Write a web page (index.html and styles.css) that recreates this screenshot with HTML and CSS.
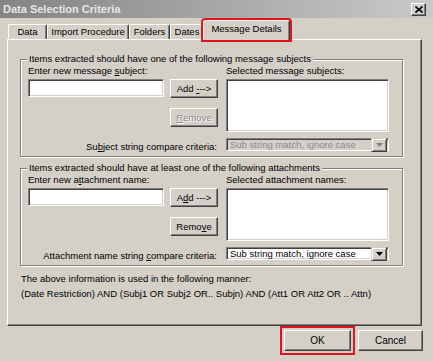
FILE: index.html
```html
<!DOCTYPE html>
<html lang="en">
<head>
    <meta charset="UTF-8">
    <title>Data Selection Criteria</title>
    <link rel="stylesheet" href="styles.css">
</head>
<body>
    <div class="window">
        <div class="titlebar">
            <span class="title">Data Selection Criteria</span>
            <span class="close">
                <svg width="8" height="7" viewBox="0 0 8 7"><path d="M0.5 0.5 L7.5 6.5 M7.5 0.5 L0.5 6.5" stroke="#000" stroke-width="1.6"/></svg>
            </span>
        </div>

        <div class="tabs">
            <div class="tab tab-data">Data</div>
            <div class="tab tab-import">Import Procedure</div>
            <div class="tab tab-folders">Folders</div>
            <div class="tab tab-dates">Dates</div>
            <div class="tab tab-active">Message Details</div>
        </div>

        <div class="panel">
            <div class="group group-first">
                <span class="legend">Items extracted should have one of the following message subjects</span>
                <div class="grid">
                    <div class="label">Enter new message <u>s</u>ubject:</div>
                    <div class="label col-right">Selected message subjects:</div>
                    <div class="textbox"></div>
                    <div class="btn-stack">
                        <button class="btn">Add <u>-</u>--&gt;</button>
                        <button class="btn disabled"><u>R</u>emove</button>
                    </div>
                    <div class="listbox"></div>
                    <div class="criteria-label">Su<u>b</u>ject string compare criteria:</div>
                    <div class="combo disabled">
                        <span class="combo-text">Sub string match, ignore case</span>
                        <span class="combo-arrow"><svg width="7" height="4" viewBox="0 0 7 4"><path d="M0 0 H7 L3.5 4 Z" fill="#808080"/></svg></span>
                    </div>
                </div>
            </div>

            <div class="group group-second">
                <span class="legend">Items extracted should have at least one of the following attachments</span>
                <div class="grid">
                    <div class="label">Enter new a<u>t</u>tachment name:</div>
                    <div class="label col-right">Selected attachment names:</div>
                    <div class="textbox"></div>
                    <div class="btn-stack">
                        <button class="btn">A<u>d</u>d ---&gt;</button>
                        <button class="btn">Remo<u>v</u>e</button>
                    </div>
                    <div class="listbox"></div>
                    <div class="criteria-label">Attachment name string <u>c</u>ompare criteria:</div>
                    <div class="combo">
                        <span class="combo-text">Sub string match, ignore case</span>
                        <span class="combo-arrow"><svg width="7" height="4" viewBox="0 0 7 4"><path d="M0 0 H7 L3.5 4 Z" fill="#000"/></svg></span>
                    </div>
                </div>
            </div>

            <p class="note note-first">The above information is used in the following manner:</p>
            <p class="note">(Date Restriction) AND (Subj1 OR Subj2 OR.. Subjn) AND (Att1 OR Att2 OR .. Attn)</p>
        </div>

        <div class="actions">
            <button class="btn btn-ok">OK</button>
            <button class="btn btn-cancel">Cancel</button>
        </div>
    </div>
</body>
</html>
```

FILE: styles.css
```css
* {
    box-sizing: border-box;
}

body {
    margin: 0;
    background-color: #d4d0c8;
    font-family: "Liberation Sans", Arial, sans-serif;
    font-size: 9.5px;
    color: #000;
}

u {
    text-decoration: underline;
    text-underline-offset: 1px;
}

.window {
    width: 433px;
    height: 361px;
    background-color: #d4d0c8;
    overflow: hidden;
}

.titlebar {
    height: 18px;
    display: flex;
    align-items: center;
    justify-content: space-between;
    padding: 0 7px 0 3px;
    background: linear-gradient(to right, #848484, #cacaca);
}

.title {
    color: #e6e6e6;
    font-weight: bold;
    font-size: 11px;
}

.close {
    width: 15px;
    height: 13px;
    display: flex;
    align-items: center;
    justify-content: center;
    background-color: #d4d0c8;
    border: 1px solid;
    border-color: #fff #404040 #404040 #fff;
    box-shadow: inset -1px -1px #808080;
}

/* tab strip */
.tabs {
    height: 21px;
    display: flex;
    align-items: flex-end;
    padding-left: 8px;
    position: relative;
    z-index: 1;
}

.tab {
    height: 15px;
    line-height: 13px;
    text-align: center;
    border: 1px solid;
    border-bottom: none;
    border-color: #fff #404040 transparent #fff;
    box-shadow: inset -1px 0 #808080;
    border-radius: 2px 2px 0 0;
}

.tab-data { width: 39px; }
.tab-import { width: 82px; }
.tab-folders { width: 41px; }
.tab-dates { width: 34px; }

.tab-active {
    width: 87px;
    height: 20px;
    line-height: 16px;
    margin: 0 0 -1px -1px;
    background-color: #d4d0c8;
    outline: 2px solid #e0141b;
    outline-offset: 0;
}

/* tab page */
.panel {
    margin-left: 7px;
    width: 415px;
    height: 287px;
    border: 1px solid;
    border-color: #fff #404040 #404040 #fff;
    box-shadow: inset -1px -1px #808080;
    padding-top: 19px;
}

.group {
    position: relative;
    margin-left: 12px;
    width: 383px;
    border: 1px solid #808080;
    box-shadow: inset 1px 1px #fff, 1px 1px #fff;
    padding: 5px 7px 5px;
}

.group-second {
    margin-top: 11px;
}

.legend {
    position: absolute;
    top: -7px;
    left: 6px;
    padding: 0 2px;
    line-height: 12px;
    background-color: #d4d0c8;
}

.grid {
    display: grid;
    grid-template-columns: 136px 6px 48px 8px 163px;
    grid-template-rows: 12px 53px 17px;
    row-gap: 2px;
}

.label {
    grid-column: 1 / 4;
    line-height: 12px;
}

.label.col-right {
    grid-column: 5;
}

.textbox,
.listbox,
.combo {
    background-color: #fff;
    border: 1px solid;
    border-color: #808080 #fff #fff #808080;
    box-shadow: inset 1px 1px #404040, inset -1px -1px #d4d0c8;
}

.textbox {
    grid-column: 1;
    height: 18px;
}

.btn-stack {
    grid-column: 3;
    display: flex;
    flex-direction: column;
    gap: 10px;
}

.listbox {
    grid-column: 5;
}

.criteria-label {
    grid-column: 1 / 4;
    margin-top: 4px;
    text-align: right;
    line-height: 17px;
    padding-right: 1px;
}

.combo {
    grid-column: 5;
    margin-top: 4px;
    display: flex;
    align-items: center;
    justify-content: space-between;
    padding: 0 1px 0 3px;
}

.combo.disabled {
    background-color: #d4d0c8;
    color: #8c8c8c;
}

.combo-arrow {
    width: 16px;
    height: 14px;
    display: flex;
    align-items: center;
    justify-content: center;
    background-color: #d4d0c8;
    border: 1px solid;
    border-color: #d4d0c8 #404040 #404040 #d4d0c8;
    box-shadow: inset 1px 1px #fff, inset -1px -1px #808080;
}

/* buttons */
.btn {
    height: 19px;
    padding: 0;
    font-family: inherit;
    font-size: 9.5px;
    color: #000;
    background-color: #d4d0c8;
    border: 1px solid;
    border-color: #fff #404040 #404040 #fff;
    box-shadow: inset -1px -1px #808080;
}

.btn.disabled {
    color: #8c8c8c;
    text-shadow: 1px 1px #fff;
}

.note {
    margin: 7px 0 0 13px;
    line-height: 12px;
}

.note-first {
    margin-top: 7px;
}

.note + .note {
    margin-top: 3px;
}

.actions {
    display: flex;
    justify-content: flex-end;
    gap: 7px;
    margin-top: 4px;
    padding-right: 10px;
}

.btn-ok {
    width: 67px;
    height: 21px;
    font-size: 10px;
    outline: 2px solid #e0141b;
    outline-offset: 2px;
}

.btn-cancel {
    width: 65px;
    height: 21px;
    font-size: 10px;
}
```
